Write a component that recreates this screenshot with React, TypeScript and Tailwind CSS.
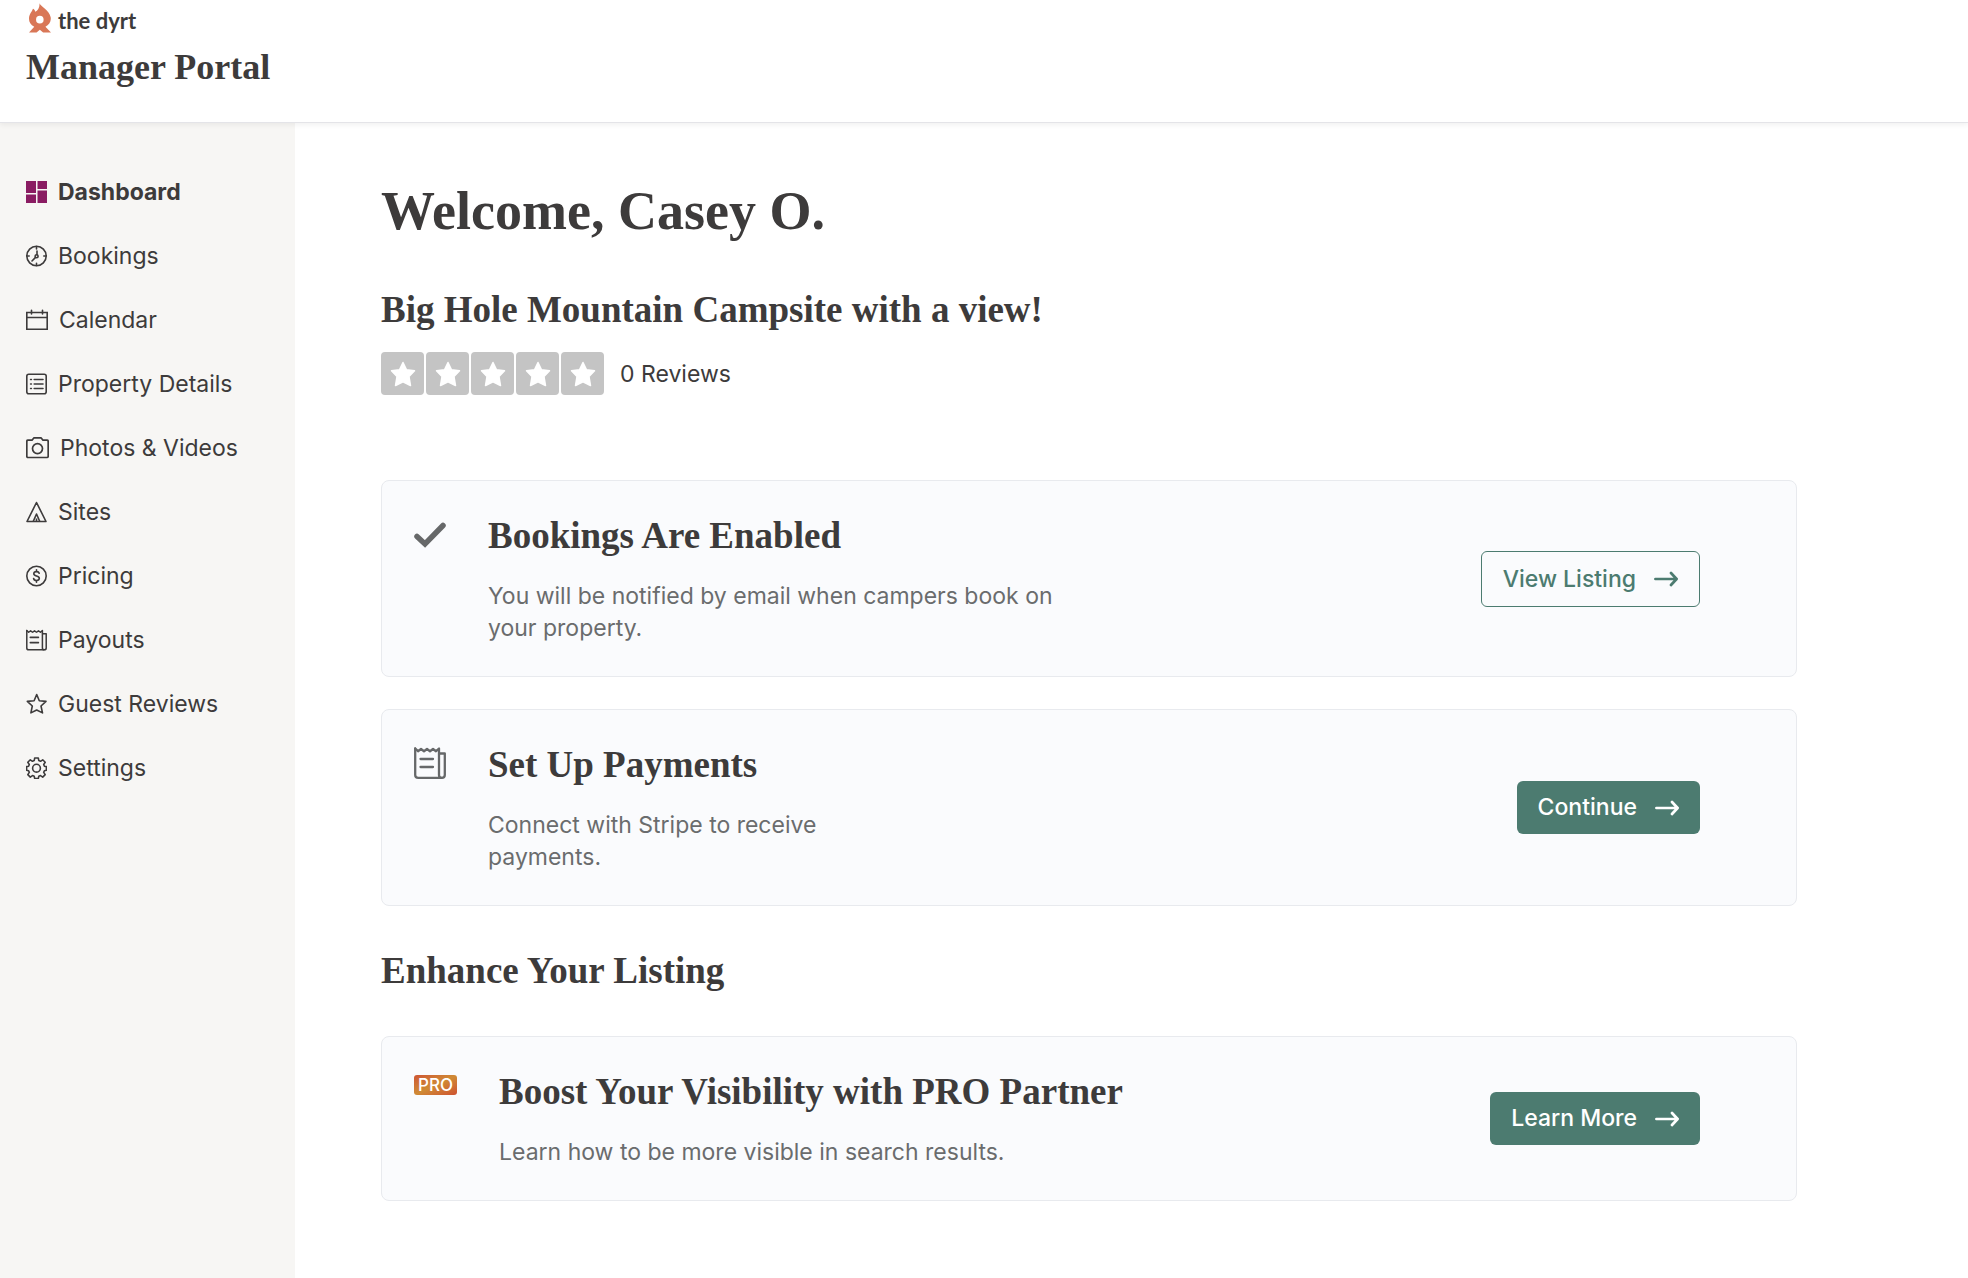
import React from "react";

type IconProps = { className?: string };

const DashboardIcon = () => (
  <svg aria-hidden="true" width="21" height="22" viewBox="0 0 21 22" fill="#8a1c62">
    <path d="M0 0h10v12H0zM11.500 0H21v8h-9.500zM0 13.500h10V22H0zM11.500 9.500H21V22h-9.500z" />
  </svg>
);

const BookingsIcon = () => (
  <svg aria-hidden="true" width="21" height="22" viewBox="0 0 21 22" fill="none" stroke="currentColor" strokeWidth="1.600" strokeLinecap="round">
    <circle cx="10.500" cy="11" r="9.700" />
    <path d="M10.500 1.500v2.400M10.500 18.200v2.300M1 11h2.200M17.800 11H20M11 6v3.600M9.300 12.600 6 16" />
    <circle cx="10.600" cy="11.300" r="1.500" />
  </svg>
);

const CalendarIcon = () => (
  <svg aria-hidden="true" width="22" height="22" viewBox="0 0 22 22" fill="none" stroke="currentColor" strokeWidth="1.600">
    <path d="M.8 3.500h20.400v16.700H.8zM.8 8.500h20.400" />
    <path d="M5.500 1.200v3.800M16.500 1.200v3.800" strokeLinecap="round" />
  </svg>
);

const DetailsIcon = () => (
  <svg aria-hidden="true" width="21" height="22" viewBox="0 0 21 22" fill="none" stroke="currentColor" strokeWidth="1.600" strokeLinecap="round">
    <rect x=".8" y="1.300" width="19.400" height="19.400" rx="2" />
    <path d="M8.200 6.500h8.800M8.200 11h8.800M8.200 15.500h8.800M4.600 6.500h.8M4.600 11h.8M4.600 15.500h.8" />
  </svg>
);

const CameraIcon = () => (
  <svg aria-hidden="true" width="23" height="22" viewBox="0 0 23 22" fill="none" stroke="currentColor" strokeWidth="1.700" strokeLinejoin="round">
    <path d="M2 3.200h4l1.800-2.300h7.400L17 3.200h4q1.200 0 1.200 1.200v14.800q0 1.300-1.200 1.300H2Q.8 20.500.8 19.200V4.400Q.8 3.200 2 3.200z" />
    <circle cx="11.500" cy="11.600" r="5" />
  </svg>
);

const TentIcon = () => (
  <svg aria-hidden="true" width="21" height="22" viewBox="0 0 21 22" fill="none" stroke="currentColor" strokeWidth="1.600" strokeLinejoin="round">
    <path d="M10.500 1.500 20 20.500H1z" />
    <path d="M7.300 20.300 10.500 13l3.200 7.300M10.500 17.500v3" />
  </svg>
);

const PricingIcon = () => (
  <svg aria-hidden="true" width="21" height="22" viewBox="0 0 21 22" fill="none" stroke="currentColor" strokeWidth="1.600" strokeLinecap="round">
    <circle cx="10.500" cy="11" r="9.700" />
    <path d="M13.200 8.300c-.3-1.200-1.300-1.700-2.700-1.700-1.600 0-2.700.8-2.700 2.100 0 3 5.500 1.500 5.500 4.600 0 1.400-1.200 2.200-2.800 2.200-1.500 0-2.600-.7-2.900-2M10.500 4.800v1.800M10.500 15.500v1.800" />
  </svg>
);

const ReceiptIcon = ({ className }: IconProps) => (
  <svg aria-hidden="true" className={className} viewBox="0 0 32 32" fill="none" stroke="currentColor" strokeWidth="2.300" strokeLinejoin="round" strokeLinecap="round">
    <path d="M1.200 1.500V28q0 2.800 3 2.800h23.600q3 0 3-2.800V6.500h-5.500" />
    <path d="M1.200 1.500 4 4.200 7 2l3 2.200L13 2l3 2.200L19 2l3 2.200 3-2.700V28q0 2.800 2.500 2.800M6.500 12H19M6.500 20H19" />
  </svg>
);

const StarOutlineIcon = () => (
  <svg aria-hidden="true" width="21" height="22" viewBox="0 0 21 22" fill="none" stroke="currentColor" strokeWidth="1.600" strokeLinejoin="round">
    <path d="m10.700 1.500 2.600 6.300 6.700.6-5 4.600 1.500 6.900-5.800-2.900-5.800 2.900 1.400-6.900-5-4.600 6.800-.6z" />
  </svg>
);

const GearIcon = () => (
  <svg aria-hidden="true" width="21" height="22" viewBox="0 0 21 22" fill="none" stroke="currentColor" strokeWidth="1.600" strokeLinejoin="round">
    <path d="M8.700 1h3.600l.5 2.600 1.700.7 2.200-1.500 2.500 2.500-1.500 2.200.7 1.700 2 .4v3.600l-2 .5-.7 1.700 1.500 2.200-2.500 2.500-2.200-1.500-1.700.7-.5 2.200H8.700l-.5-2.200-1.700-.7-2.200 1.500-2.500-2.500 1.500-2.200-.7-1.700-2-.5V9.600l2-.4.7-1.700-1.500-2.200 2.500-2.500 2.200 1.500 1.700-.7z" />
    <circle cx="10.500" cy="11.200" r="3.900" />
  </svg>
);

const CheckIcon = () => (
  <svg aria-hidden="true" className="h-8 w-8" viewBox="0 0 32 32" fill="none" stroke="currentColor" strokeWidth="5.500" strokeLinecap="round" strokeLinejoin="miter">
    <path d="M3 17.500 11 25 29 6.500" />
  </svg>
);

const ArrowIcon = () => (
  <svg aria-hidden="true" width="24" height="16" viewBox="0 0 24 16" fill="none" stroke="currentColor" strokeWidth="2.700" strokeLinecap="round" strokeLinejoin="round">
    <path d="M1.400 8h21M17 2l5.600 6L17 14" />
  </svg>
);

const FlameLogo = () => (
  <svg aria-hidden="true" width="22" height="30" viewBox="0 0 67 90" fill="#d97757">
    <path
      fillRule="evenodd"
      d="M32 0C35 10 62 20 66 43c2 13-5 23-16 29l17 17H43l-10-8-10 8H0l16-17C5 66 0 57 0 47 0 33 8 28 12 17c3 1 6 4 7 9C27 22 33 13 32 0zM33 38.500a11.500 11.500 0 1 0 0 23 11.500 11.500 0 0 0 0-23z"
    />
  </svg>
);

const navItems = [
  { label: "Dashboard", icon: <DashboardIcon />, active: true },
  { label: "Bookings", icon: <BookingsIcon /> },
  { label: "Calendar", icon: <CalendarIcon /> },
  { label: "Property Details", icon: <DetailsIcon /> },
  { label: "Photos & Videos", icon: <CameraIcon /> },
  { label: "Sites", icon: <TentIcon /> },
  { label: "Pricing", icon: <PricingIcon /> },
  { label: "Payouts", icon: <ReceiptIcon className="h-[22px] w-[21px]" /> },
  { label: "Guest Reviews", icon: <StarOutlineIcon /> },
  { label: "Settings", icon: <GearIcon /> },
];

const heading = "font-['Liberation_Serif',serif] font-bold text-[37px] leading-[46px]";

type CardProps = {
  icon: React.ReactNode;
  title: string;
  text: string;
  textClass: string;
  action: string;
  outlined?: boolean;
};

function Card({ icon, title, text, textClass, action, outlined }: CardProps) {
  return (
    <section className="flex items-center justify-between rounded-lg border border-[#e8eaee] bg-[#fafbfd] py-8 pr-24 pl-8">
      <div className="flex items-start gap-[42px]">
        <div className="shrink-0 text-[#666869]">{icon}</div>
        <div>
          <h3 className={heading}>{title}</h3>
          <p className={`mt-[21px] text-[23px] leading-8 text-[#6a6c6d] ${textClass}`}>{text}</p>
        </div>
      </div>
      <button
        type="button"
        className={
          outlined
            ? "flex shrink-0 items-center gap-[18px] rounded-md border border-[#4c7b70] px-[21px] py-[11px] text-[23px] leading-8 font-medium text-[#4c7b70]"
            : "flex shrink-0 items-center gap-[18px] rounded-md bg-[#4c7b70] px-[21px] py-[10px] text-[23px] leading-[33px] font-medium text-white"
        }
      >
        {action}
        <ArrowIcon />
      </button>
    </section>
  );
}

export default function App() {
  return (
    <div className="flex min-h-screen flex-col bg-white font-['Inter',sans-serif] text-[#3d3b3b]">
      <header className="relative z-10 h-[123px] border-b border-[#e4e4e8] bg-white px-[26px] pt-[3px] shadow-[0_2px_5px_rgba(0,0,0,0.06)]">
        <a href="#" className="flex w-fit items-start gap-[7px] pl-[3px]">
          <FlameLogo />
          <span className="pt-[3px] font-['Lato',sans-serif] text-[22px] leading-[30px] font-bold">the dyrt</span>
        </a>
        <div className="mt-2 font-['Liberation_Serif',serif] text-[36px] leading-[46px] font-bold">Manager Portal</div>
      </header>
      <div className="flex grow">
        <nav aria-label="Manager" className="w-[295px] shrink-0 bg-[#f7f6f4] pt-[37px] pl-[26px]">
          <ul>
            {navItems.map((item) => (
              <li key={item.label}>
                <a
                  href="#"
                  aria-current={item.active ? "page" : undefined}
                  className={`flex h-16 items-center gap-[11px] text-[23px] ${item.active ? "font-bold" : "font-normal"}`}
                >
                  {item.icon}
                  {item.label}
                </a>
              </li>
            ))}
          </ul>
        </nav>
        <main className="grow pt-14 pr-[171px] pb-16 pl-[86px]">
          <h1 className="font-['Liberation_Serif',serif] text-[54px] leading-[64px] font-bold">Welcome, Casey O.</h1>
          <h2 className={`mt-11 ${heading}`}>Big Hole Mountain Campsite with a view!</h2>
          <div className="mt-[19px] flex items-center gap-4">
            <div role="img" aria-label="0 out of 5 stars" className="flex gap-[2px]">
              {[0, 1, 2, 3, 4].map((i) => (
                <span key={i} className="flex h-[43px] w-[43px] items-center justify-center rounded-[4px] bg-[#c4c4c4]">
                  <svg width="26" height="26" viewBox="0 0 26 26" fill="#fff" stroke="#fff" strokeWidth="1.500" strokeLinejoin="round">
                    <path d="m13 1.500 3.500 7.300 8 1-5.500 5.800 1.500 8.900L13 20.800 5.500 24.500 7 15.600 1.500 9.800l8-1z" />
                  </svg>
                </span>
              ))}
            </div>
            <span className="text-[23px] leading-8">0 Reviews</span>
          </div>
          <div className="mt-[85px] flex flex-col gap-8">
            <Card
              icon={<div className="py-[6px]"><CheckIcon /></div>}
              title="Bookings Are Enabled"
              text="You will be notified by email when campers book on your property."
              textClass="max-w-[600px]"
              action="View Listing"
              outlined
            />
            <Card
              icon={<div className="py-[5px]"><ReceiptIcon className="h-8 w-8" /></div>}
              title="Set Up Payments"
              text="Connect with Stripe to receive payments."
              textClass="max-w-[400px]"
              action="Continue"
            />
          </div>
          <h2 className={`mt-[42px] mb-[42px] ${heading}`}>Enhance Your Listing</h2>
          <Card
            icon={
              <span className="mt-[6px] flex h-5 w-[43px] items-center justify-center rounded-[3px] bg-linear-to-br from-[#cd5434] via-[#cf8a35] to-[#cd5030] text-[17px] leading-5 font-medium text-white">
                PRO
              </span>
            }
            title="Boost Your Visibility with PRO Partner"
            text="Learn how to be more visible in search results."
            textClass="max-w-[700px]"
            action="Learn More"
          />
        </main>
      </div>
    </div>
  );
}
